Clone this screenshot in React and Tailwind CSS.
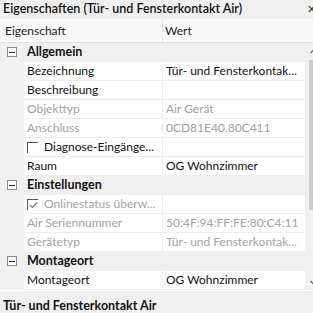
import React from 'react';

const rows = [
  { type: 'cat', name: 'Allgemein' },
  { name: 'Bezeichnung', value: 'Tür- und Fensterkontak...' },
  { name: 'Beschreibung', value: '' },
  { name: 'Objekttyp', value: 'Air Gerät', muted: true },
  { name: 'Anschluss', value: '0CD81E40.80C411', muted: true },
  { name: 'Diagnose-Eingänge...', value: '', check: 'off' },
  { name: 'Raum', value: 'OG Wohnzimmer' },
  { type: 'cat', name: 'Einstellungen' },
  { name: 'Onlinestatus überw...', value: '', check: 'on', muted: true },
  { name: 'Air Seriennummer', value: '50:4F:94:FF:FE:80:C4:11', muted: true },
  { name: 'Gerätetyp', value: 'Tür- und Fensterkontak...', muted: true },
  { type: 'cat', name: 'Montageort' },
  { name: 'Montageort', value: 'OG Wohnzimmer' },
];

const font = { fontFamily: 'Lato, "Noto Sans", sans-serif' };

const Collapse = () => (
  <div className="w-[10px] h-[10px] border border-[#8a8a8a] bg-white flex items-center justify-center">
    <div className="w-[6px] h-px bg-[#333]" />
  </div>
);

const Check = ({ on }) => (
  <div className="w-[11px] h-[11px] mr-[6px] shrink-0 border-l border-t border-[#555] flex items-center justify-center">
    {on && (
      <svg width="9" height="8" viewBox="0 0 9 8">
        <path d="M1 4 L3.5 6.5 L8 1.5" fill="none" stroke="#7a7a7a" strokeWidth="1.2" />
      </svg>
    )}
  </div>
);

const Row = ({ row }) => {
  if (row.type === 'cat') {
    return (
      <div className="h-[19px] flex items-center bg-[#f0f0f0] border-b border-[#f0f0f0]">
        <div className="w-[24px] flex justify-center">
          <Collapse />
        </div>
        <span className="pl-[3px] font-bold text-[12.5px] text-[#111]">{row.name}</span>
      </div>
    );
  }
  const color = row.muted ? 'text-[#a3a3a3]' : 'text-[#111]';
  return (
    <div className="h-[19px] flex bg-[#f0f0f0]">
      <div className="w-[24px] shrink-0" />
      <div className={`w-[139px] shrink-0 bg-white border-b border-r border-[#eeeeee] flex items-center pl-[3px] text-[12px] whitespace-nowrap overflow-hidden ${color}`}>
        {row.check && <Check on={row.check === 'on'} />}
        {row.name}
      </div>
      <div className={`flex-1 bg-white border-b border-[#eeeeee] flex items-center pl-[3px] text-[12px] whitespace-nowrap overflow-hidden ${color}`}>
        {row.value}
      </div>
    </div>
  );
};

export default function App() {
  return (
    <div className="w-[313px] h-[313px] overflow-hidden bg-[#f0f0f0] flex flex-col" style={font}>
      <div className="h-[19px] flex items-center justify-between pl-[3px] shrink-0">
        <span className="text-[12.5px] font-semibold text-[#111] whitespace-nowrap">
          Eigenschaften (Tür- und Fensterkontakt Air)
        </span>
        <span className="text-[11px] text-[#333] mr-[-3px]">✕</span>
      </div>
      <div className="h-[24px] shrink-0 flex bg-[#f9f9f9] border-b border-[#e3e3e3]">
        <div className="w-[163px] shrink-0 border-r border-[#e3e3e3] flex items-center pl-[5px] text-[12px] text-[#222]">
          Eigenschaft
        </div>
        <div className="flex-1 flex items-center pl-[2px] text-[12px] text-[#222]">Wert</div>
      </div>
      <div className="h-[247px] shrink-0 flex">
        <div className="w-[305px] shrink-0 flex flex-col">
          {rows.map((r, i) => (
            <Row key={i} row={r} />
          ))}
        </div>
        <div className="w-[17px] shrink-0 bg-[#f0f0f0] flex flex-col items-center">
          <div className="h-[16px] flex items-center justify-center">
            <svg width="7" height="5" viewBox="0 0 7 5">
              <path d="M0.5 4 L3.5 1 L6.5 4" fill="none" stroke="#606060" strokeWidth="1.2" />
            </svg>
          </div>
          <div className="mt-[1px] w-[9px] h-[150px] bg-[#cdcdcd]" />
          <div className="flex-1" />
          <div className="h-[16px] flex items-center justify-center">
            <svg width="7" height="5" viewBox="0 0 7 5">
              <path d="M0.5 1 L3.5 4 L6.5 1" fill="none" stroke="#606060" strokeWidth="1.2" />
            </svg>
          </div>
        </div>
      </div>
      <div className="h-px bg-white shrink-0" />
      <div className="flex-1 flex items-center pl-[3px] pt-[6px]">
        <span className="text-[12.5px] font-bold text-[#111] whitespace-nowrap">Tür- und Fensterkontakt Air</span>
      </div>
    </div>
  );
}
